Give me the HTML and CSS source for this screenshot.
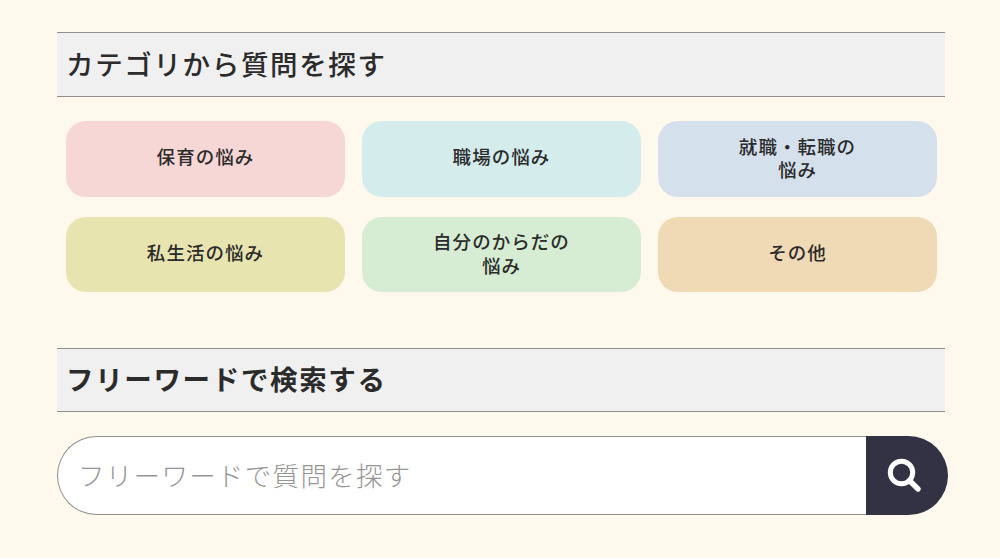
FILE: index.html
```html
<!DOCTYPE html>
<html lang="ja">
<head>
<meta charset="utf-8">
<title>質問を探す</title>
<link rel="stylesheet" href="styles.css">
</head>
<body>
<main class="page">
  <section class="category">
    <h2 class="heading">カテゴリから質問を探す</h2>
    <div class="grid">
      <a class="tile pink">保育の悩み</a>
      <a class="tile aqua">職場の悩み</a>
      <a class="tile blue"><span class="two-line">就職・転職の<br>悩み</span></a>
      <a class="tile yellow">私生活の悩み</a>
      <a class="tile green"><span class="two-line">自分のからだの<br>悩み</span></a>
      <a class="tile orange">その他</a>
    </div>
  </section>
  <section class="free">
    <h2 class="heading heading-free">フリーワードで検索する</h2>
    <form class="search">
      <input class="search-input" type="text" placeholder="フリーワードで質問を探す">
      <button class="search-btn" type="button" aria-label="検索">
        <svg class="search-icon" viewBox="0 0 36 36" width="36" height="36"><circle cx="15.5" cy="15.5" r="11.2" fill="none" stroke="#fff" stroke-width="5"/><path d="M23.5 23.5L32 32" fill="none" stroke="#fff" stroke-width="5.4" stroke-linecap="round"/></svg>
      </button>
    </form>
  </section>
</main>
</body>
</html>
```
FILE: styles.css
```css
* { box-sizing: border-box; }
html, body { margin: 0; padding: 0; }
body {
  background: #fff8ed;
  color: #2b2b2b;
  font-family: "Noto Sans CJK JP", "Noto Sans", sans-serif;
  height: 558px;
  overflow: hidden;
}
.page { width: 891px; margin-left: 57px; padding-top: 32px; }
.heading {
  width: 888px;
  height: 65px;
  margin: 0;
  padding: 0 0 2px 9px;
  display: flex;
  align-items: center;
  background: #f0f0f0;
  border-top: 1px solid #8f8f8f;
  border-bottom: 1px solid #8f8f8f;
  font-size: 27.5px;
  font-weight: 500;
  letter-spacing: 1.65px;
  line-height: 1;
}
.heading-free { height: 64px; font-weight: 700; }
.grid {
  display: grid;
  grid-template-columns: repeat(3, 279px);
  grid-auto-rows: 75.5px;
  gap: 20px 17px;
  margin: 24px 0 0 9px;
}
.tile {
  display: flex;
  align-items: center;
  justify-content: center;
  padding-bottom: 4px;
  border-radius: 20px;
  font-size: 18.5px;
  font-weight: 500;
  line-height: 23.5px;
  letter-spacing: 1.05px;
  text-align: center;
}
.two-line { padding-top: 3px; }
.pink { background: #f7d6d6; }
.aqua { background: #d4ecec; }
.blue { background: #d5e0ed; }
.yellow { background: #e8e4b0; }
.green { background: #d7edd3; }
.orange { background: #f0d9b5; }
.free { margin-top: 56px; }
.search { display: flex; height: 79px; margin-top: 24px; }
.search-input {
  flex: 1;
  min-width: 0;
  height: 79px;
  padding: 0 0 3px 20px;
  border: 1px solid #8f8f8f;
  border-right: 0;
  border-radius: 40px 0 0 40px;
  background: #fff;
  outline: 0;
  font-family: inherit;
  font-size: 26.5px;
  font-weight: 300;
  letter-spacing: 1.3px;
  color: #333;
}
.search-input::placeholder { color: #969696; opacity: 1; }
.search-btn {
  flex: none;
  width: 82px;
  height: 79px;
  padding: 0 6px 2px 0;
  display: flex;
  align-items: center;
  justify-content: center;
  border: 0;
  border-radius: 0 40px 40px 0;
  background: #333144;
}
.search-icon { display: block; }
```
